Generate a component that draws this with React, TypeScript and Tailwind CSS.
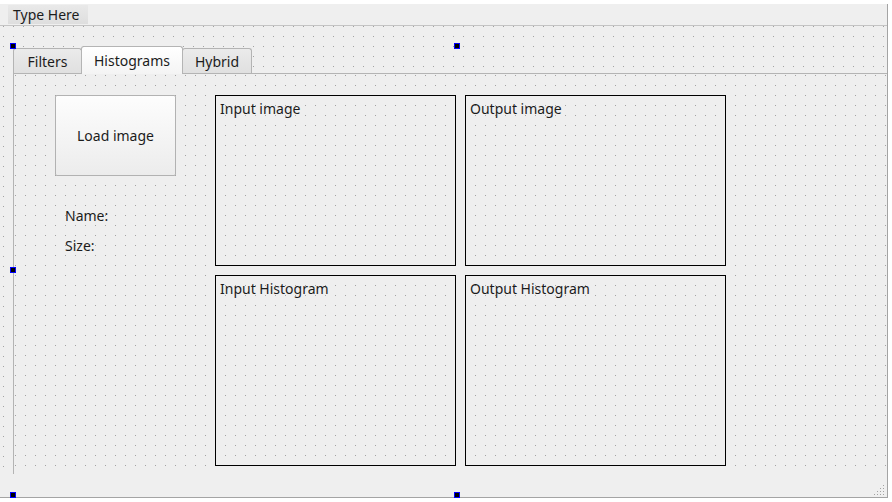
const outerDots =
  'bg-[radial-gradient(circle_at_0.5px_0.5px,#a3a3a3_0.75px,transparent_0.75px)] bg-[length:10px_10px]'

function Handle({ className }: { className: string }) {
  return (
    <div className={`absolute w-[6px] h-[6px] border border-[#0000ff] bg-black ${className}`} />
  )
}

function Frame({ label, w, h }: { label: string; w: string; h: string }) {
  return (
    <div className={`${w} ${h} border border-black pl-[4px] pt-[3px] leading-[20px]`}>
      {label}
    </div>
  )
}

function SizeGrip() {
  const dots = [
    [9, 0],
    [6, 3], [9, 3],
    [3, 6], [6, 6], [9, 6],
    [0, 9], [3, 9], [6, 9], [9, 9],
  ]
  return (
    <svg width="10" height="10" viewBox="0 0 10 10" className="block">
      {dots.map(([x, y]) => (
        <rect key={`${x}-${y}`} x={x} y={y} width="1" height="1" fill="#a2a2a2" />
      ))}
    </svg>
  )
}

export default function App() {
  return (
    <div
      className="relative w-[892px] h-[502px] bg-white overflow-hidden text-[14px] text-[#1c1c1c]"
      style={{ fontFamily: '"Noto Sans", "DejaVu Sans", sans-serif' }}
    >
      <div className="mt-[4px] w-[888px] h-[494px] bg-[#efefef] border-r border-b border-[#a4a4a4] flex flex-col">
        {/* Menu bar */}
        <div className="h-[22px] border-b border-[#c4c4c4] flex items-start pl-[8px] pt-px">
          <div className="h-[19px] pl-[5px] pr-[9px] leading-[19px] bg-gradient-to-b from-[#e9e9e9] to-[#dedede]">
            Type Here
          </div>
        </div>

        {/* Central widget */}
        <div className={`h-[448px] overflow-hidden pl-[13px] pt-[20px] ${outerDots} bg-[position:3px_0px]`}>
          <div className="w-[888px] h-[449px] flex flex-col">
            {/* Tab bar */}
            <div className="h-[27px] flex items-end">
              <div className="w-[69px] h-[25px] border border-b-0 border-[#b4b4b4] rounded-t-[3px] bg-gradient-to-b from-[#ebebeb] to-[#e0e0e0] flex items-center justify-center leading-[20px] pt-[2px]">
                Filters
              </div>
              <div className="relative z-10 -ml-px -mb-px w-[102px] h-[28px] border border-b-0 border-[#b4b4b4] rounded-t-[3px] bg-gradient-to-b from-white to-[#f4f4f4] flex items-center justify-center leading-[20px] pt-px">
                Histograms
              </div>
              <div className="-ml-px w-[70px] h-[25px] border border-b-0 border-[#b4b4b4] rounded-t-[3px] bg-gradient-to-b from-[#ebebeb] to-[#e0e0e0] flex items-center justify-center leading-[20px] pt-[2px]">
                Hybrid
              </div>
            </div>

            {/* Tab pane */}
            <div className="flex-1 border-l border-t border-[#b4b4b4] bg-[#efefef]">
              <div className={`h-full ${outerDots} bg-[position:1px_1px] flex pt-[21px] pl-[41px]`}>
                <div className="w-[121px] flex flex-col">
                  <button className="w-[121px] h-[81px] border border-[#b2b2b2] rounded-[2px] bg-gradient-to-b from-[#fdfdfd] to-[#ececec] leading-[20px]">
                    Load image
                  </button>
                  <div className="pl-[10px] pt-[30px] leading-[20px]">Name:</div>
                  <div className="pl-[10px] pt-[10px] leading-[20px]">Size:</div>
                </div>
                <div className="ml-[39px] grid grid-cols-[241px_261px] grid-rows-[171px_191px] gap-[9px]">
                  <Frame label="Input image" w="w-[241px]" h="h-[171px]" />
                  <Frame label="Output image" w="w-[261px]" h="h-[171px]" />
                  <Frame label="Input Histogram" w="w-[241px]" h="h-[191px]" />
                  <Frame label="Output Histogram" w="w-[261px]" h="h-[191px]" />
                </div>
              </div>
            </div>
          </div>
        </div>

        {/* Status bar */}
        <div className="flex-1 flex items-end justify-end pr-[3px] pb-[2px]">
          <SizeGrip />
        </div>
      </div>

      {/* Selection handles */}
      <Handle className="left-[10px] top-[43px]" />
      <Handle className="left-[454px] top-[43px]" />
      <Handle className="left-[10px] top-[267px]" />
      <Handle className="left-[10px] top-[492px]" />
      <Handle className="left-[454px] top-[492px]" />
    </div>
  )
}
